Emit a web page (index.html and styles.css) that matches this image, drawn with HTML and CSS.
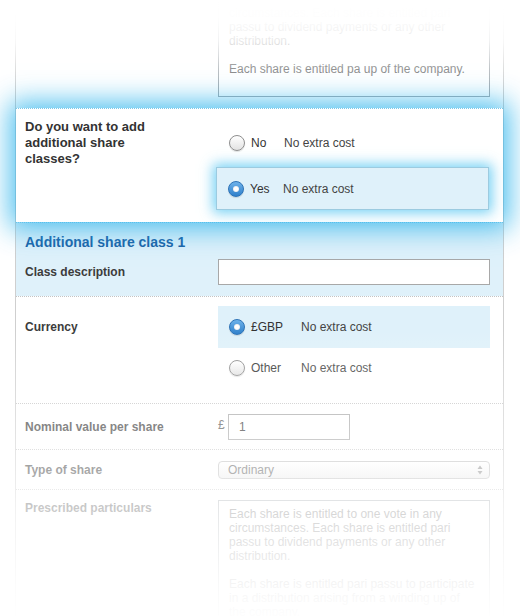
FILE: index.html
```html
<!DOCTYPE html>
<html>
<head>
<meta charset="utf-8">
<title>Share classes</title>
<link rel="stylesheet" href="styles.css">
</head>
<body>
<div class="page">
  <div class="panel">
    <section class="row row-top">
      <div class="label"></div>
      <div class="field">
        <div class="textarea textarea-top">
          <p>circumstances. Each share is entitled pari<br>passu to dividend payments or any other<br>distribution.</p>
          <p>Each share is entitled pa up of the company.</p>
        </div>
      </div>
    </section>

    <section class="row row-focus">
      <div class="label label-q">Do you want to add additional share classes?</div>
      <div class="field">
        <div class="option">
          <span class="radio"></span>
          <span class="opt-name w33">No</span>
          <span class="opt-cost">No extra cost</span>
        </div>
        <div class="option option-box">
          <span class="radio on"></span>
          <span class="opt-name w33">Yes</span>
          <span class="opt-cost">No extra cost</span>
        </div>
      </div>
    </section>

    <section class="shareclass">
      <h2 class="sc-title">Additional share class 1</h2>
      <div class="row row-plain">
        <div class="label">Class description</div>
        <div class="field"><div class="input"></div></div>
      </div>
    </section>

    <section class="row row-currency">
      <div class="label">Currency</div>
      <div class="field">
        <div class="option option-sel">
          <span class="radio on"></span>
          <span class="opt-name w50">£GBP</span>
          <span class="opt-cost">No extra cost</span>
        </div>
        <div class="option option-other">
          <span class="radio"></span>
          <span class="opt-name w50">Other</span>
          <span class="opt-cost">No extra cost</span>
        </div>
      </div>
    </section>

    <section class="row row-nominal">
      <div class="label">Nominal value per share</div>
      <div class="field field-flex">
        <span class="pound">£</span>
        <div class="input input-small">1</div>
      </div>
    </section>

    <section class="row row-type">
      <div class="label">Type of share</div>
      <div class="field">
        <div class="select">
          <span>Ordinary</span>
          <svg class="arrows" width="6" height="10" viewBox="0 0 6 10"><path d="M3 0.5 L5.5 4 L0.5 4 Z" fill="#8a8a8a"/><path d="M0.5 6 L5.5 6 L3 9.5 Z" fill="#8a8a8a"/></svg>
        </div>
      </div>
    </section>

    <section class="row row-presc">
      <div class="label">Prescribed particulars</div>
      <div class="field">
        <div class="textarea textarea-bottom">
          <p>Each share is entitled to one vote in any<br>circumstances. Each share is entitled pari<br>passu to dividend payments or any other<br>distribution.</p>
          <p>Each share is entitled pari passu to participate<br>in a distribution arising from a winding up of<br>the company.</p>
        </div>
      </div>
    </section>
  </div>
  <div class="fade fade-top"></div>
  <div class="fade fade-bottom"></div>
</div>
</body>
</html>
```
FILE: styles.css
```css
html, body {
  margin: 0;
  padding: 0;
  overflow: hidden;
  background: #fff;
}
body {
  font-family: "Liberation Sans", Arial, Helvetica, sans-serif;
  font-size: 12px;
  color: #444;
}
.page {
  position: relative;
  width: 520px;
  height: 616px;
  overflow: hidden;
}
.panel {
  margin-left: 15px;
  width: 487px;
  border-left: 1px solid #cfcfcf;
  border-right: 1px solid #cfcfcf;
}
.row {
  display: grid;
  grid-template-columns: 193px 272px;
  padding: 0 13px 0 9px;
  border-top: 1px dotted #c4c4c4;
}
.label {
  font-weight: bold;
  font-size: 12px;
  line-height: 16px;
  color: #3c3c3c;
}
.textarea {
  border: 1px solid #a3a9ae;
  background: #fff;
  padding: 6px 10px 20px;
  line-height: 14px;
  color: #666;
  white-space: nowrap;
  overflow: hidden;
}
.textarea p {
  margin: 0;
}
.textarea p + p {
  margin-top: 14px;
}

/* top row */
.row-top {
  border-top: 0;
  padding-bottom: 11px;
}
.textarea-top {
  margin-top: -1px;
}

/* focused question row */
.row-focus {
  position: relative;
  z-index: 5;
  background: #fff;
  border-top: 1px dotted #7ccaea;
  box-shadow: 0 0 26px 6px rgba(40, 178, 235, 0.82);
}
.label-q {
  padding-top: 10px;
  font-size: 13px;
  color: #333;
  max-width: 140px;
}
.row-focus .field {
  padding: 12px 0;
}
.option {
  display: flex;
  align-items: center;
  height: 43px;
  padding-left: 11px;
  box-sizing: border-box;
  color: #333;
}
.option-box {
  margin: 3px 1px 0 -2px;
  background: #dff1fa;
  border: 1px solid #9ccbe0;
  box-shadow: 0 0 12px 3px rgba(60, 190, 240, 0.7);
}
.radio {
  flex: none;
  width: 16px;
  height: 16px;
  box-sizing: border-box;
  border-radius: 50%;
  border: 1px solid #8e8e8e;
  background: linear-gradient(#ffffff, #e2e2e2);
  box-shadow: 0 1px 1px rgba(0, 0, 0, 0.12);
  margin-right: 6px;
}
.radio.on {
  display: flex;
  align-items: center;
  justify-content: center;
  border-color: #2c72b6;
  background: linear-gradient(#6eb2ea, #2f80cb);
}
.radio.on::after {
  content: "";
  width: 6px;
  height: 6px;
  border-radius: 50%;
  background: radial-gradient(#ffffff 40%, #d6d6d6);
}
.opt-name {
  flex: none;
}
.w33 { width: 33px; }
.w50 { width: 50px; }
.opt-cost {
  color: #444;
}

/* additional share class */
.shareclass {
  background: #dff1fa;
  border-top: 1px dotted #8fd0ee;
  padding: 10px 0 11px;
}
.sc-title {
  margin: 0 0 8px;
  padding-left: 9px;
  font-size: 14px;
  line-height: 18px;
  font-weight: bold;
  color: #1b62a6;
}
.row-plain {
  border-top: 0;
  align-items: center;
}
.input {
  height: 26px;
  box-sizing: border-box;
  border: 1px solid #a8a8a8;
  background: #fff;
}

/* currency */
.row-currency .label {
  padding-top: 22px;
}
.row-currency .field {
  padding: 9px 0 15px;
}
.option-sel {
  height: 42px;
  background: #dff1fa;
}
.option-other {
  height: 40px;
}

/* nominal */
.row-nominal .label {
  padding-top: 15px;
}
.field-flex {
  display: flex;
  align-items: flex-start;
  padding: 10px 0 9px;
}
.pound {
  width: 10px;
  line-height: 16px;
  margin-top: 3px;
  color: #555;
}
.input-small {
  width: 122px;
  padding-left: 10px;
  line-height: 24px;
  color: #333;
}

/* type of share */
.row-type .label {
  padding-top: 12px;
}
.row-type .field {
  padding: 11px 0 10px;
}
.select {
  height: 18px;
  box-sizing: border-box;
  border: 1px solid #bdbdbd;
  border-radius: 4px;
  background: linear-gradient(#ffffff, #ececec);
  display: flex;
  align-items: center;
  justify-content: space-between;
  padding: 0 6px 0 9px;
  color: #555;
  line-height: 16px;
}

/* prescribed */
.row-presc .label {
  padding-top: 10px;
}
.row-presc .field {
  padding-top: 10px;
}
.textarea-bottom {
  height: 150px;
  box-sizing: border-box;
}

/* fades */
.fade {
  position: absolute;
  left: 0;
  width: 520px;
  z-index: 4;
  pointer-events: none;
}
.fade-top {
  top: 0;
  height: 100px;
  background: linear-gradient(to bottom,
    rgba(255,255,255,1) 0px,
    rgba(255,255,255,0.99) 18px,
    rgba(255,255,255,0.94) 27px,
    rgba(255,255,255,0.85) 41px,
    rgba(255,255,255,0.6) 55px,
    rgba(255,255,255,0.3) 69px,
    rgba(255,255,255,0.1) 85px,
    rgba(255,255,255,0) 100px);
}
.fade-bottom {
  top: 330px;
  height: 286px;
  background: linear-gradient(to bottom,
    rgba(255,255,255,0) 0%,
    rgba(255,255,255,0.18) 13%,
    rgba(255,255,255,0.38) 34%,
    rgba(255,255,255,0.55) 49%,
    rgba(255,255,255,0.72) 62%,
    rgba(255,255,255,0.93) 89%,
    rgba(255,255,255,0.99) 100%);
}
```
